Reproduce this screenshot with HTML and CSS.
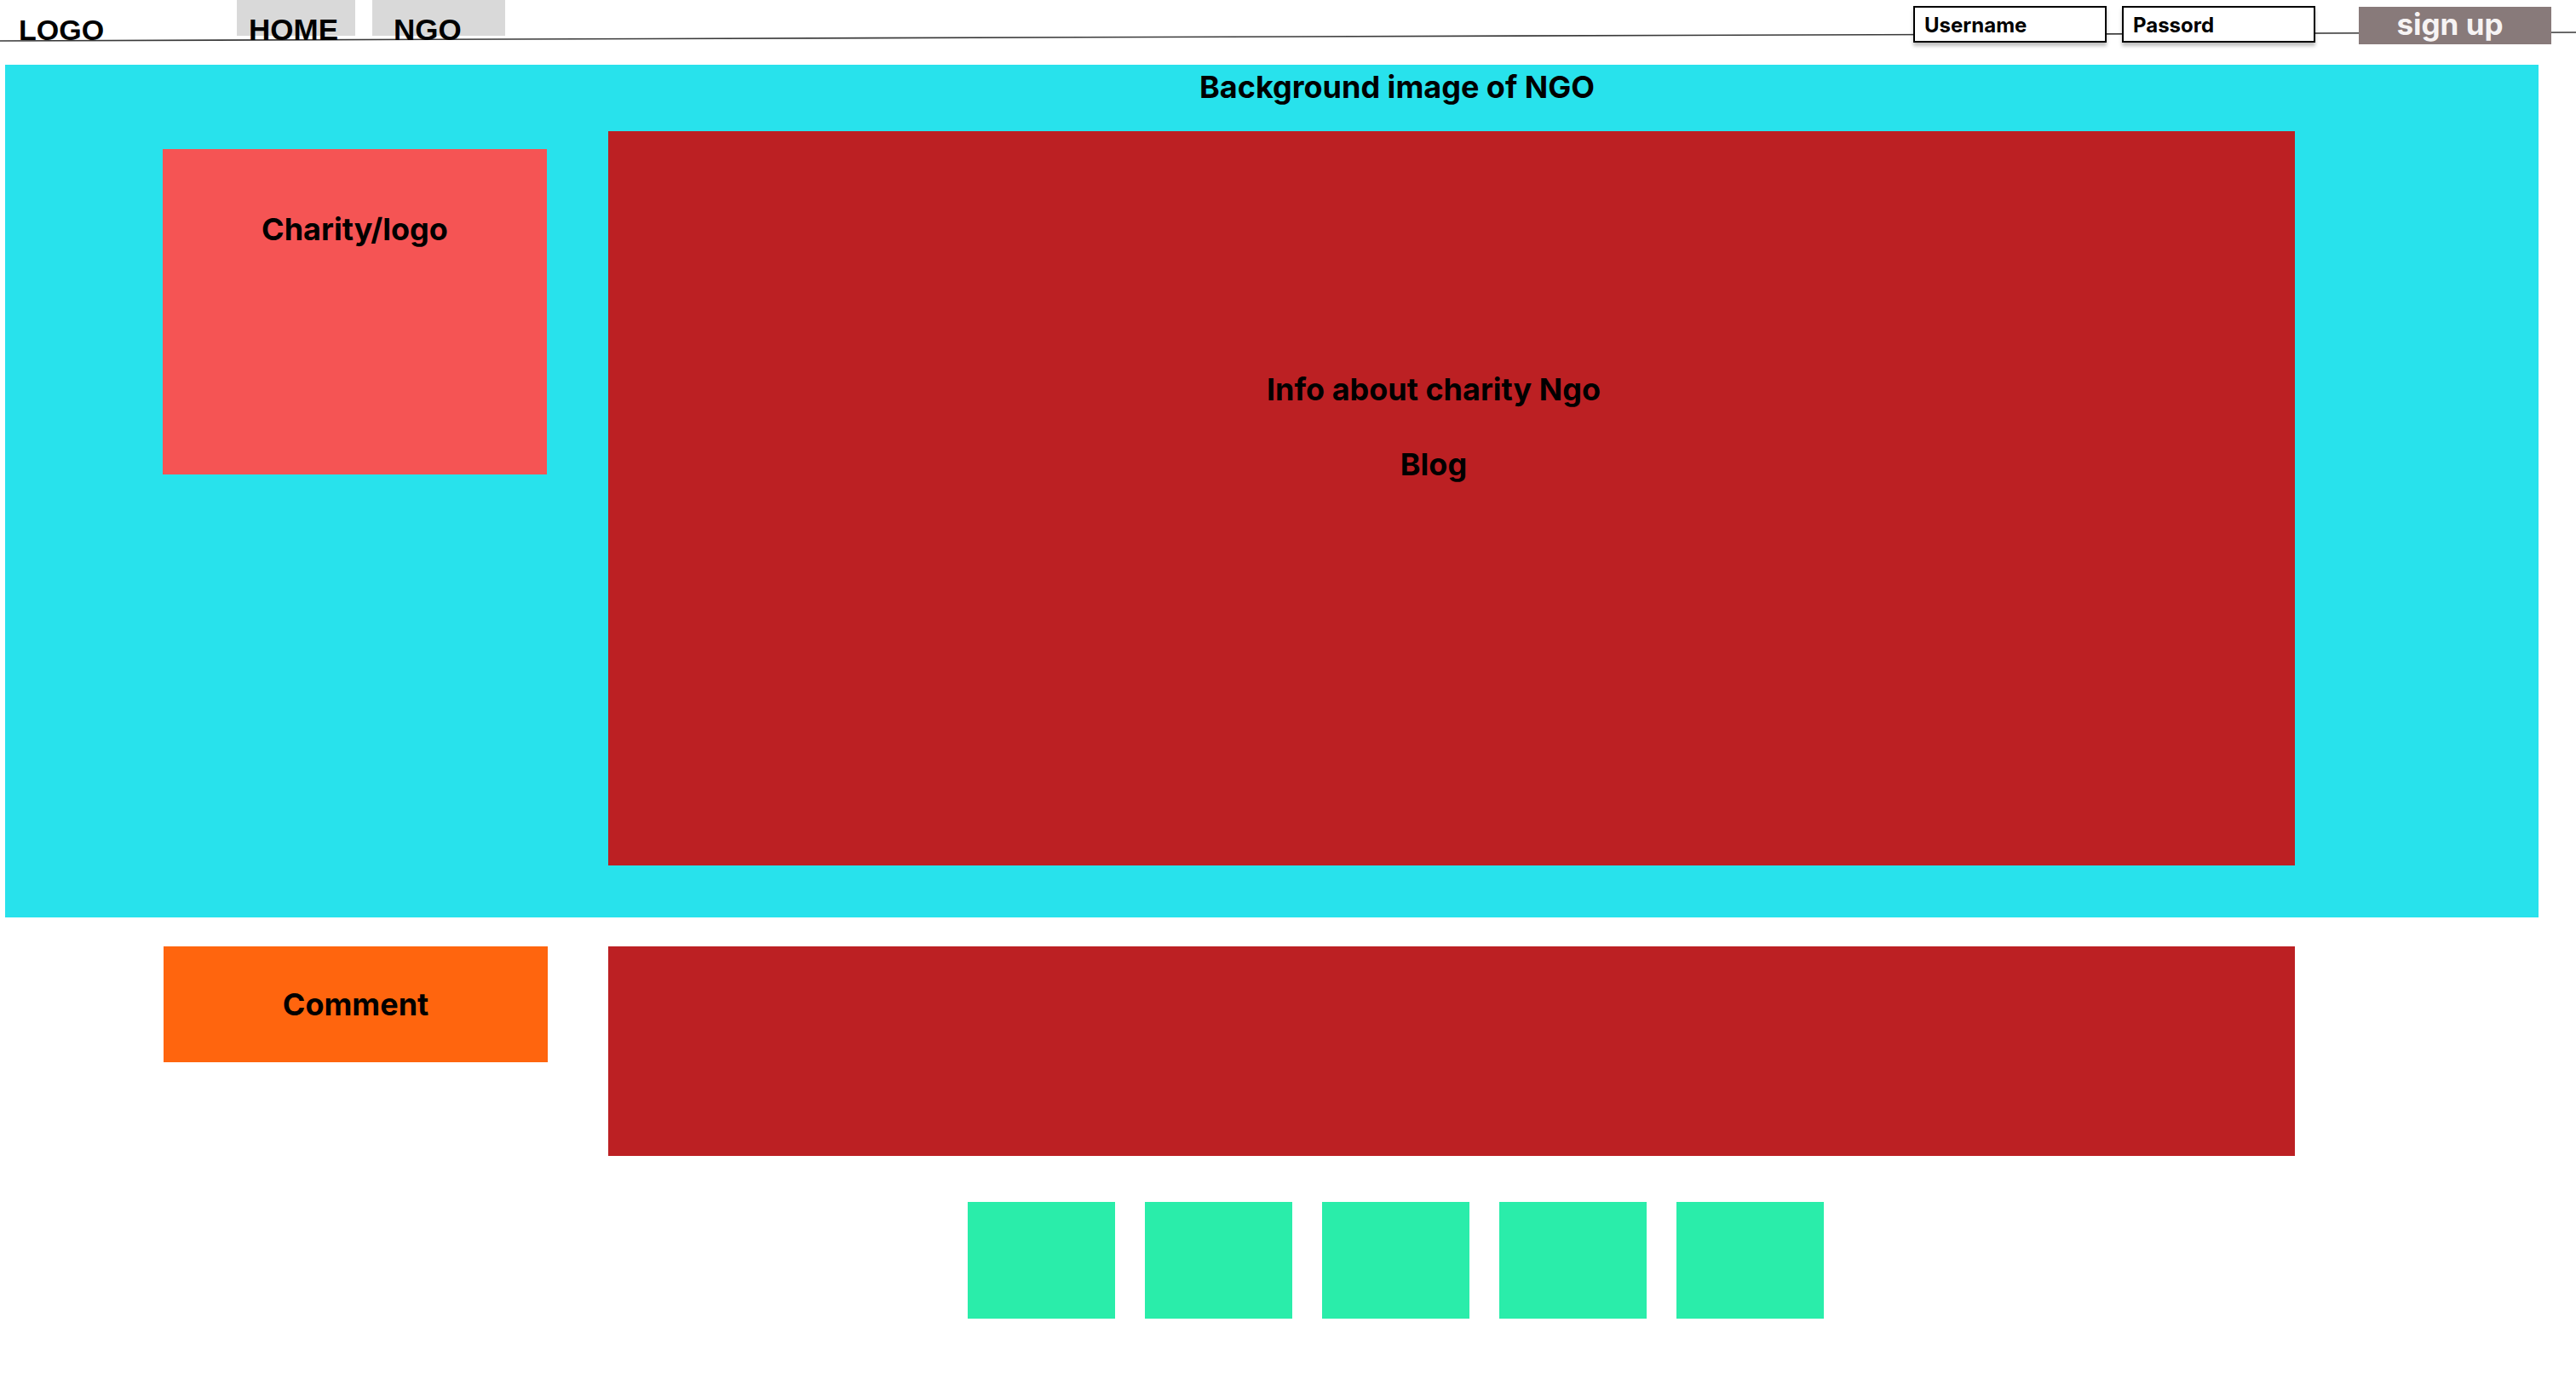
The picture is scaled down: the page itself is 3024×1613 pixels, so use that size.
FILE: index.html
```html
<!DOCTYPE html>
<html lang="en">
<head>
<meta charset="utf-8">
<title>NGO wireframe</title>
<link rel="stylesheet" href="styles.css">
</head>
<body>
<header class="topbar">
  <svg class="topbar-line" width="3024" height="76" viewBox="0 0 3024 76" aria-hidden="true">
    <line x1="0" y1="48" x2="3024" y2="38" stroke="#3a3a3a" stroke-width="1.6"/>
  </svg>
  <div class="logo">LOGO</div>
  <nav class="nav">
    <a class="tab tab-home">HOME</a>
    <a class="tab tab-ngo">NGO</a>
  </nav>
  <div class="auth">
    <div class="field">Username</div>
    <div class="field">Passord</div>
    <div class="signup">sign up</div>
  </div>
</header>

<section class="hero">
  <h1 class="hero-title">Background image of NGO</h1>
  <div class="hero-row">
    <div class="charity">Charity/logo</div>
    <div class="info">
      <p class="info-text">Info about charity Ngo<br><br>Blog</p>
    </div>
  </div>
</section>

<section class="comments">
  <div class="comment">Comment</div>
  <div class="comment-body"></div>
</section>

<section class="tiles">
  <div class="tile"></div>
  <div class="tile"></div>
  <div class="tile"></div>
  <div class="tile"></div>
  <div class="tile"></div>
</section>
</body>
</html>
```

FILE: styles.css
```css
* { box-sizing: border-box; }

body {
  margin: 0;
  width: 3024px;
  background: #ffffff;
  font-family: "Inter", "Liberation Sans", sans-serif;
  color: #000;
}

.topbar {
  position: relative;
  height: 76px;
  display: flex;
  align-items: flex-start;
}

.topbar-line {
  position: absolute;
  left: 0;
  top: 0;
  z-index: 0;
}

.logo, .nav, .auth { position: relative; z-index: 1; }

.logo {
  width: 278px;
  padding-left: 22px;
  padding-top: 15px;
  font-family: "Liberation Sans", Arial, sans-serif;
  font-weight: 700;
  font-size: 34px;
  line-height: 40px;
}

.nav {
  display: flex;
  gap: 20px;
}

.tab {
  display: block;
  height: 42px;
  background: #d9d9d9;
  padding-top: 15px;
  font-family: "Liberation Sans", Arial, sans-serif;
  font-weight: 700;
  font-size: 35px;
  line-height: 40px;
  white-space: nowrap;
  color: #000;
}

.tab-home { width: 139px; padding-left: 14px; }
.tab-ngo { width: 156px; padding-left: 25px; }

.auth {
  margin-left: auto;
  margin-right: 29px;
  display: flex;
  align-items: flex-start;
}

.field {
  width: 227px;
  height: 43px;
  margin-top: 7px;
  margin-right: 18px;
  border: 2px solid #000;
  background: #fff;
  box-shadow: 0 4px 4px rgba(0, 0, 0, 0.25);
  padding-left: 11px;
  font-weight: 700;
  font-size: 24px;
  line-height: 41px;
}

.field + .field { margin-right: 51px; }

.signup {
  width: 226px;
  height: 44px;
  margin-top: 8px;
  background: #887a7a;
  color: #f6f3f3;
  text-align: center;
  padding-right: 12px;
  font-weight: 700;
  font-size: 35px;
  line-height: 40px;
}

.hero {
  margin-left: 6px;
  width: 2974px;
  height: 1001px;
  background: #28e2ec;
  padding-top: 4px;
}

.hero-title {
  margin: 0;
  padding-left: 1402px;
  font-weight: 700;
  font-size: 36px;
  line-height: 44px;
  white-space: nowrap;
}

.hero-row {
  display: flex;
  align-items: flex-start;
  margin-top: 30px;
}

.charity {
  margin-left: 185px;
  margin-top: 21px;
  width: 451px;
  height: 382px;
  background: #f55454;
  padding-top: 72px;
  text-align: center;
  font-weight: 700;
  font-size: 36px;
  line-height: 44px;
}

.info {
  margin-left: 72px;
  width: 1980px;
  height: 862px;
  background: #bc2023;
  padding-top: 281px;
  padding-right: 42px;
}

.info-text {
  margin: 0;
  text-align: center;
  font-weight: 700;
  font-size: 36px;
  line-height: 44px;
}

.comments {
  display: flex;
  align-items: flex-start;
  margin-top: 34px;
  padding-left: 192px;
  gap: 71px;
}

.comment {
  width: 451px;
  height: 136px;
  background: #ff650e;
  display: flex;
  align-items: center;
  justify-content: center;
  font-weight: 700;
  font-size: 36px;
  line-height: 44px;
}

.comment-body {
  width: 1980px;
  height: 246px;
  background: #bc2023;
}

.tiles {
  display: flex;
  gap: 35px;
  margin-top: 54px;
  padding-left: 1136px;
}

.tile {
  width: 173px;
  height: 137px;
  background: #2aedaa;
}
```
